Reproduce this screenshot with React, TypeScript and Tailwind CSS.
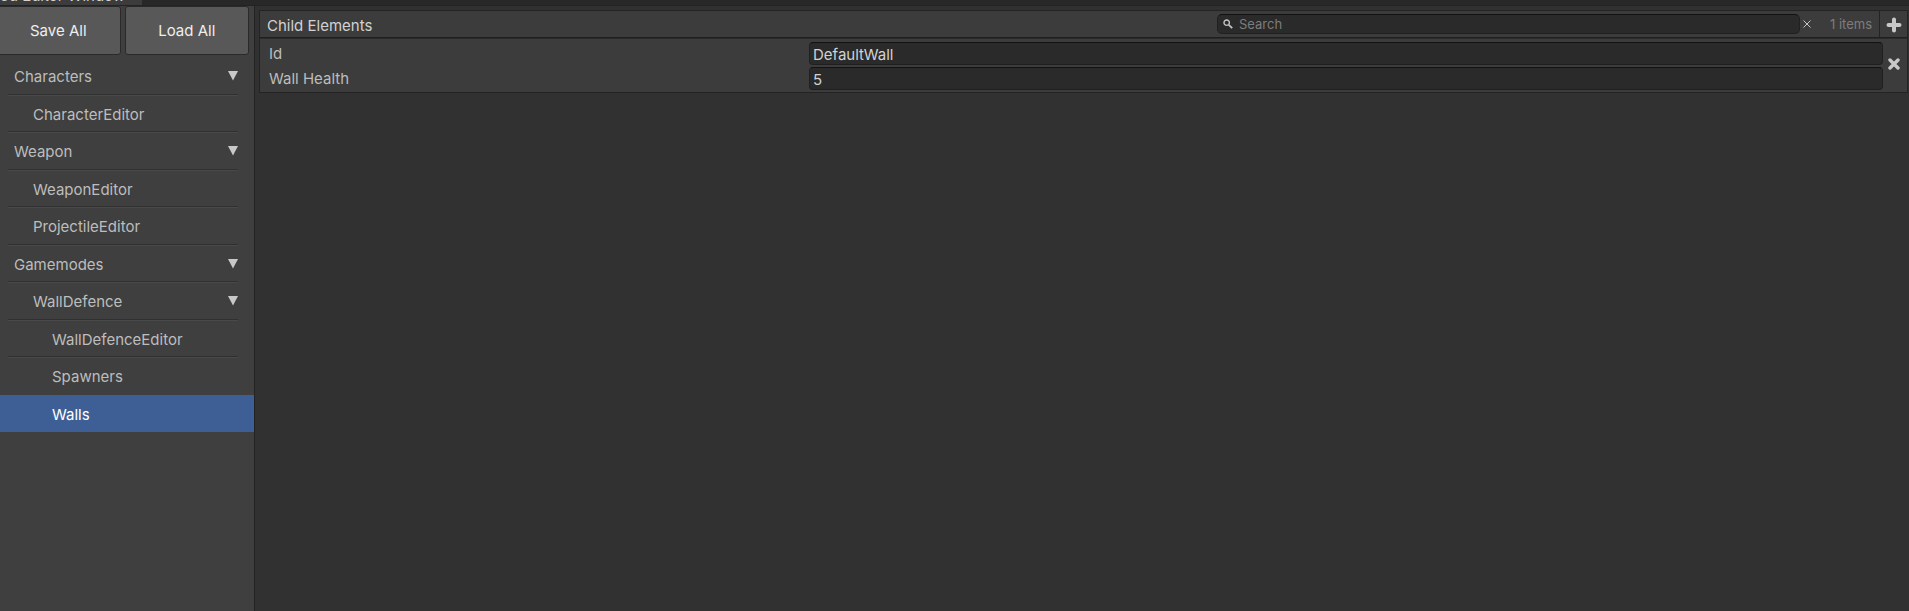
import { useState } from "react";

type Item = { label: string; depth: 0 | 1 | 2; group?: boolean };

const items: Item[] = [
  { label: "Characters", depth: 0, group: true },
  { label: "CharacterEditor", depth: 1 },
  { label: "Weapon", depth: 0, group: true },
  { label: "WeaponEditor", depth: 1 },
  { label: "ProjectileEditor", depth: 1 },
  { label: "Gamemodes", depth: 0, group: true },
  { label: "WallDefence", depth: 1, group: true },
  { label: "WallDefenceEditor", depth: 2 },
  { label: "Spawners", depth: 2 },
  { label: "Walls", depth: 2 },
];

const indent = ["pl-3.5", "pl-[33px]", "pl-[52px]"];

type MenuItemProps = { item: Item; selected: boolean; divider: boolean; onSelect: () => void };

function MenuItem({ item, selected, divider, onSelect }: MenuItemProps) {
  return (
    <li className={selected ? "relative bg-[#3e5f96]" : "relative"}>
      <button
        type="button"
        onClick={onSelect}
        className={`flex h-full w-full items-center justify-between pr-4 text-left ${indent[item.depth]} ${selected ? "text-white" : "text-[#bdbdbd]"}`}
      >
        <span className="pt-px">{item.label}</span>
        {item.group && (
          <svg viewBox="0 0 10 10" className="h-2.5 w-2.5 fill-[#c8c8c8]" aria-hidden="true">
            <path d="M0 0h10L5 9.6z" />
          </svg>
        )}
      </button>
      {divider && <span className="absolute right-4 -bottom-px left-2 h-0.5 border-t border-b border-t-[#303030] border-b-[#494949]" />}
    </li>
  );
}

function Sidebar() {
  const [active, setActive] = useState("Walls");
  return (
    <nav className="w-[255px] shrink-0 border-r border-[#232323] bg-[#3f3f3f]">
      <div className="-ml-1 flex gap-1 pr-[5px]">
        {["Save All", "Load All"].map((label) => (
          <button
            key={label}
            type="button"
            className="h-[49px] flex-1 rounded-[3px] border border-[#2a2a2a] bg-[#585858] text-[#eeeeee]"
          >
            {label}
          </button>
        ))}
      </div>
      <ul className="mt-0.5 grid auto-rows-[38px_37px]">
        {items.map((item, i) => (
          <MenuItem
            key={item.label}
            item={item}
            selected={item.label === active}
            divider={item.label !== active && i < items.length - 1 && items[i + 1].label !== active}
            onSelect={() => setActive(item.label)}
          />
        ))}
      </ul>
    </nav>
  );
}

const fieldClass =
  "h-[23px] w-full min-w-0 rounded-[4px] border border-[#202020] border-t-[#121212] bg-[#2a2a2a] px-[3px] pt-0.5 text-[#d2d2d2] outline-none";

function ElementList() {
  const [id, setId] = useState("DefaultWall");
  const [health, setHealth] = useState("5");
  const [query, setQuery] = useState("");
  return (
    <main className="min-w-0 flex-1 pt-1 pr-px pl-1">
      <section className="border border-[#232323] bg-[#3c3c3c]">
        <header className="flex h-[27px] items-stretch border-b border-[#1f1f1f]">
          <h1 className="flex-1 pt-[3px] pl-[7px] text-[#d2d2d2]">Child Elements</h1>
          <div className="flex items-center">
            <label className="flex h-5 w-[583px] items-center gap-1.5 rounded-[5px] border border-[#202020] border-t-[#121212] bg-[#2a2a2a] pl-[5px]">
              <svg viewBox="0 0 10 10" className="h-2.5 w-2.5 fill-none stroke-[#c4c4c4]" aria-hidden="true">
                <circle cx="3.7" cy="3.7" r="2.7" strokeWidth="1.4" />
                <path d="M5.8 5.8 9.2 9.2" strokeWidth="1.8" />
              </svg>
              <input
                aria-label="Search"
                placeholder="Search"
                value={query}
                onChange={(e) => setQuery(e.target.value)}
                className="min-w-0 flex-1 bg-transparent text-[13px] leading-4 outline-none placeholder:text-[#7d7d7d]"
              />
            </label>
            <button type="button" aria-label="Clear search" onClick={() => setQuery("")} className="flex w-3.5 justify-center">
              <svg viewBox="0 0 8 8" className="h-2 w-2 stroke-[#c4c4c4]" aria-hidden="true">
                <path d="M0.5 0.5 7.5 7.5M7.5 0.5 0.5 7.5" />
              </svg>
            </button>
            <span className="w-[65px] pr-[7px] text-right text-[13px] leading-4 text-[#7d7d7d]">1 items</span>
          </div>
          <button type="button" aria-label="Add element" className="flex w-7 items-center justify-center border-l border-[#232323] pt-0.5">
            <svg viewBox="0 0 16 16" className="h-4 w-4 stroke-[#c8c8c8]" aria-hidden="true">
              <path d="M8 2.5v11M2.5 8h11" strokeWidth="4" strokeLinecap="round" />
            </svg>
          </button>
        </header>
        <div className="flex h-[54px] border-t border-[#2b2b2b]">
          <div className="grid flex-1 grid-cols-[540px_1fr] content-start gap-y-0.5 pt-[3px] pl-[9px]">
            <label htmlFor="wall-id" className="text-[#bdbdbd]">Id</label>
            <input id="wall-id" value={id} onChange={(e) => setId(e.target.value)} className={fieldClass} />
            <label htmlFor="wall-health" className="text-[#bdbdbd]">Wall Health</label>
            <input id="wall-health" value={health} onChange={(e) => setHealth(e.target.value)} className={fieldClass} />
          </div>
          <button type="button" aria-label="Remove element" className="flex w-6 items-center justify-center pr-0.5 pb-1">
            <svg viewBox="0 0 12 12" className="h-3 w-3 stroke-[#c8c8c8]" aria-hidden="true">
              <path d="M2 2 10 10M10 2 2 10" strokeWidth="3.4" strokeLinecap="round" />
            </svg>
          </button>
        </div>
      </section>
    </main>
  );
}

export default function App() {
  return (
    <div className="flex min-h-screen flex-col overflow-x-hidden bg-[#313131] font-['Inter',sans-serif] text-[15px] leading-[23px]">
      <div className="flex h-1.5 items-end overflow-hidden border-b border-[#232323] bg-[#282828]">
        <div className="h-full w-[142px] bg-[#3c3c3c]">
          <span className="relative -top-4 block whitespace-nowrap text-[#d2d2d2]">ed Editor Window</span>
        </div>
      </div>
      <div className="flex flex-1">
        <Sidebar />
        <ElementList />
      </div>
    </div>
  );
}
